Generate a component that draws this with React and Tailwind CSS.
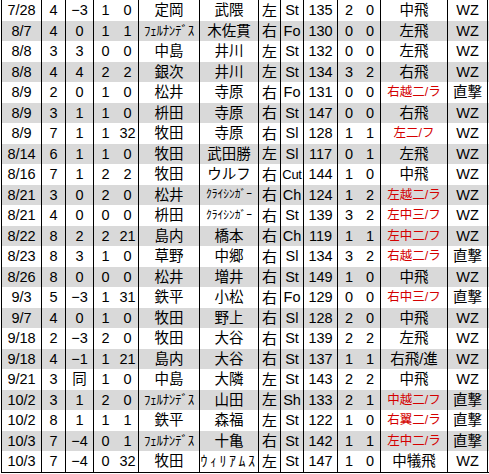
import React from "react";

const rows = [
  ["7/28", "4", "−3", "1", "0", "定岡", "武隈", "左", "St", "135", "2", "0", "中飛", "WZ"],
  ["8/7", "4", "0", "1", "1", "ﾌｪﾙﾅﾝﾃﾞｽ", "木佐貫", "右", "Fo", "130", "0", "0", "左飛", "WZ"],
  ["8/8", "3", "3", "0", "0", "中島", "井川", "左", "St", "132", "0", "0", "左飛", "WZ"],
  ["8/8", "4", "4", "2", "2", "銀次", "井川", "左", "St", "134", "3", "2", "右飛", "WZ"],
  ["8/9", "2", "0", "1", "0", "松井", "寺原", "右", "Fo", "131", "0", "0", "右越二/ラ", "直撃"],
  ["8/9", "3", "1", "1", "0", "枡田", "寺原", "右", "St", "147", "0", "0", "右飛", "WZ"],
  ["8/9", "7", "1", "1", "32", "牧田", "寺原", "右", "Sl", "128", "1", "1", "左二/フ", "WZ"],
  ["8/14", "6", "1", "1", "0", "牧田", "武田勝", "左", "Sl", "117", "0", "1", "左飛", "WZ"],
  ["8/16", "7", "1", "2", "2", "牧田", "ウルフ", "右", "Cut", "144", "1", "0", "中飛", "WZ"],
  ["8/21", "3", "0", "2", "0", "松井", "ｸﾗｲｼﾝｶﾞｰ", "右", "Ch", "124", "1", "2", "左越二/ラ", "WZ"],
  ["8/21", "4", "0", "0", "0", "枡田", "ｸﾗｲｼﾝｶﾞｰ", "右", "St", "139", "3", "2", "左中三/フ", "WZ"],
  ["8/22", "8", "2", "2", "21", "島内", "橋本", "右", "Ch", "119", "1", "1", "左中二/フ", "WZ"],
  ["8/23", "8", "3", "1", "0", "草野", "中郷", "右", "Sl", "134", "3", "2", "右越二/ラ", "直撃"],
  ["8/26", "8", "0", "0", "0", "松井", "増井", "右", "St", "149", "1", "0", "中飛", "WZ"],
  ["9/3", "5", "−3", "1", "31", "鉄平", "小松", "右", "Fo", "129", "0", "0", "右中三/フ", "直撃"],
  ["9/7", "4", "0", "1", "0", "牧田", "野上", "右", "Sl", "128", "2", "0", "中飛", "WZ"],
  ["9/18", "2", "−3", "2", "0", "牧田", "大谷", "右", "St", "139", "2", "2", "左飛", "WZ"],
  ["9/18", "4", "−1", "1", "21", "島内", "大谷", "右", "St", "137", "1", "1", "右飛/進", "WZ"],
  ["9/21", "3", "同", "1", "0", "中島", "大隣", "左", "St", "143", "2", "2", "中飛", "WZ"],
  ["10/2", "3", "1", "2", "0", "ﾌｪﾙﾅﾝﾃﾞｽ", "山田", "左", "Sh", "133", "2", "1", "中越二/フ", "直撃"],
  ["10/2", "8", "1", "1", "1", "鉄平", "森福", "左", "St", "122", "1", "0", "右翼二/ラ", "直撃"],
  ["10/3", "7", "−4", "0", "1", "ﾌｪﾙﾅﾝﾃﾞｽ", "十亀", "右", "St", "142", "1", "1", "左中二/ラ", "直撃"],
  ["10/3", "7", "−4", "0", "32", "牧田", "ｳｨﾘｱﾑｽ", "左", "St", "147", "1", "0", "中犠飛", "WZ"],
];

const colClass = [
  "w-[40px] border-l border-black",
  "w-[24px] border-l border-black",
  "w-[28px] border-l border-black",
  "w-[24px] border-l border-black",
  "w-[21px]",
  "w-[61px] border-l border-black",
  "w-[59px] border-l border-black",
  "w-[22px] border-l border-black",
  "w-[23px] border-l border-black",
  "w-[34px] border-l border-black",
  "w-[23px] border-l border-black",
  "w-[20px]",
  "w-[67px] border-l border-black",
  "w-[41px] border-l border-r border-black",
];

function textClass(ci, v) {
  if (ci === 12 && v.includes("/") && v !== "右飛/進") {
    return "text-[12.5px] text-[#d40000]";
  }
  if (v === "ｸﾗｲｼﾝｶﾞｰ") return "text-[11.5px] text-black";
  if (v === "ﾌｪﾙﾅﾝﾃﾞｽ") return "text-[13px] tracking-[-0.3px] text-black";
  if (v === "ｳｨﾘｱﾑｽ") return "text-[14px] tracking-[2.5px] text-black";
  if (v === "Cut") return "text-[13px] tracking-[-0.3px] text-black";
  if (ci === 7) return "text-[15px] text-black";
  return "text-[14.5px] text-black";
}

export default function App() {
  return (
    <div
      className="w-[489px] h-[474px] bg-white pl-px"
      style={{ fontFamily: '"Liberation Sans", "Noto Sans CJK JP", sans-serif' }}
    >
      <div className="w-[488px] border-b border-black">
        {rows.map((r, ri) => (
          <div
            key={ri}
            className={`flex h-[20.5px] ${ri % 2 === 1 ? "bg-[#d9d9d9]" : "bg-white"}`}
          >
            {r.map((v, ci) => (
              <div
                key={ci}
                className={`${colClass[ci]} flex items-center justify-center overflow-hidden whitespace-nowrap leading-none`}
              >
                <span className={textClass(ci, v)}>{v}</span>
              </div>
            ))}
          </div>
        ))}
      </div>
    </div>
  );
}
